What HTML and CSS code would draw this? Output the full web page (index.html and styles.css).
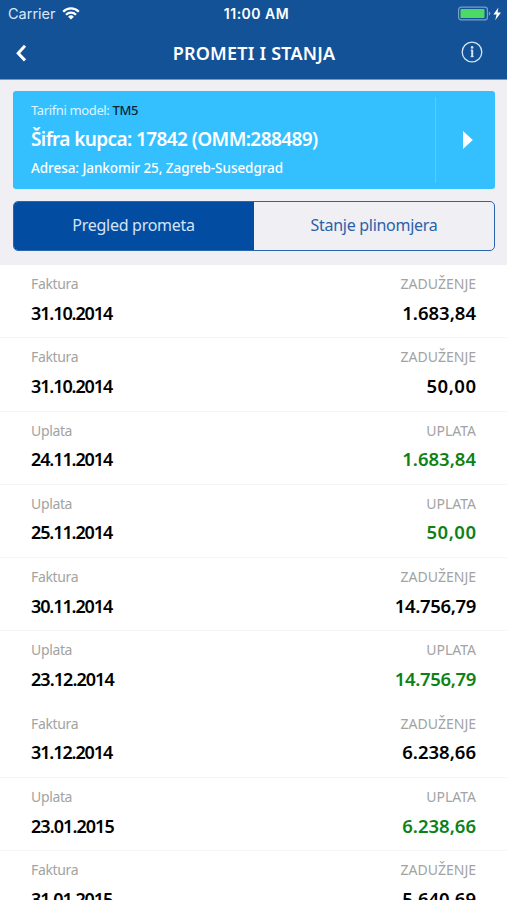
FILE: index.html
```html
<!DOCTYPE html>
<html lang="hr">
<head>
    <meta charset="UTF-8">
    <meta name="viewport" content="width=device-width, initial-scale=1.0">
    <title>Prometi i stanja</title>
    <link rel="stylesheet" href="styles.css">
</head>
<body>

    <header>
        <div class="status-bar">
            <div class="carrier">
                <span>Carrier</span>
                <svg class="wifi" viewBox="0 0 18 13" width="18" height="13">
                    <path d="M1.2 4.7a11 11 0 0 1 15.6 0" fill="none" stroke="#fff" stroke-width="2.3"/>
                    <path d="M4 7.7a7 7 0 0 1 10 0" fill="none" stroke="#fff" stroke-width="2.2"/>
                    <path d="M9 12.6 6.1 9.7a4.1 4.1 0 0 1 5.8 0z" fill="#fff"/>
                </svg>
            </div>
            <span class="time">11:00 AM</span>
            <div class="battery">
                <svg viewBox="0 0 44 16" width="44" height="16">
                    <rect x="0.6" y="1.1" width="28.8" height="12.8" rx="2.6" fill="none" stroke="#7a9fc9" stroke-width="1.2"/>
                    <rect x="2.5" y="3" width="24" height="9" rx="0.8" fill="#4cd964"/>
                    <path d="M30.8 5.5a2.2 2.2 0 0 1 0 4.2z" fill="#7a9fc9"/>
                    <path d="M40.4 1.4 35.4 8.4h3.2l-1.4 5.8L43 6.6h-3.4z" fill="#fff"/>
                </svg>
            </div>
        </div>
        <div class="nav-bar">
            <svg class="back" viewBox="0 0 12 18" width="12" height="18">
                <path d="M10 1.8 3.2 9.2l6.8 7.2" fill="none" stroke="#fff" stroke-width="3"/>
            </svg>
            <h1>PROMETI I STANJA</h1>
            <svg class="info" viewBox="0 0 22 22" width="22" height="22">
                <circle cx="11" cy="11" r="9.8" fill="none" stroke="#d5e6f8" stroke-width="1.3"/>
                <circle cx="11.1" cy="6.4" r="1.3" fill="#d5e6f8"/>
                <path d="M9.6 9.2h1.6M9.6 15.6h3" fill="none" stroke="#d5e6f8" stroke-width="1"/>
                <path d="M11.2 8.7v7.4" fill="none" stroke="#d5e6f8" stroke-width="2"/>
            </svg>
        </div>
    </header>

    <section class="top">
        <div class="customer">
            <div class="customer-info">
                <p class="model">Tarifni model: <span>TM5</span></p>
                <h2>Šifra kupca: 17842 (OMM:288489)</h2>
                <p class="address">Adresa: Jankomir 25, Zagreb-Susedgrad</p>
            </div>
            <div class="customer-arrow">
                <svg viewBox="0 0 10 18" width="10" height="18">
                    <path d="M0 0 9.8 9 0 18z" fill="#fff"/>
                </svg>
            </div>
        </div>
        <div class="tabs">
            <div class="tab active"><span>Pregled prometa</span></div>
            <div class="tab"><span>Stanje plinomjera</span></div>
        </div>
    </section>

    <ul class="list">
        <li>
            <div class="label"><span>Faktura</span><span class="type">ZADUŽENJE</span></div>
            <div class="value"><span class="date">31.10.2014</span><span class="amount">1.683,84</span></div>
        </li>
        <li>
            <div class="label"><span>Faktura</span><span class="type">ZADUŽENJE</span></div>
            <div class="value"><span class="date">31.10.2014</span><span class="amount short">50,00</span></div>
        </li>
        <li>
            <div class="label"><span>Uplata</span><span class="type">UPLATA</span></div>
            <div class="value"><span class="date">24.11.2014</span><span class="amount green">1.683,84</span></div>
        </li>
        <li>
            <div class="label"><span>Uplata</span><span class="type">UPLATA</span></div>
            <div class="value"><span class="date">25.11.2014</span><span class="amount short green">50,00</span></div>
        </li>
        <li>
            <div class="label"><span>Faktura</span><span class="type">ZADUŽENJE</span></div>
            <div class="value"><span class="date">30.11.2014</span><span class="amount long">14.756,79</span></div>
        </li>
        <li class="no-line">
            <div class="label"><span>Uplata</span><span class="type">UPLATA</span></div>
            <div class="value"><span class="date wide">23.12.2014</span><span class="amount long green">14.756,79</span></div>
        </li>
        <li>
            <div class="label"><span>Faktura</span><span class="type">ZADUŽENJE</span></div>
            <div class="value"><span class="date">31.12.2014</span><span class="amount">6.238,66</span></div>
        </li>
        <li>
            <div class="label"><span>Uplata</span><span class="type">UPLATA</span></div>
            <div class="value"><span class="date wide">23.01.2015</span><span class="amount green">6.238,66</span></div>
        </li>
        <li>
            <div class="label"><span>Faktura</span><span class="type">ZADUŽENJE</span></div>
            <div class="value"><span class="date">31.01.2015</span><span class="amount">5.640,69</span></div>
        </li>
    </ul>

</body>
</html>
```
FILE: styles.css
```css
* {
    box-sizing: border-box;
    margin: 0;
    padding: 0;
}

body {
    font-family: "Noto Sans", "Open Sans", sans-serif;
    background: #fff;
    color: #000;
    height: 900px;
    overflow: hidden;
}

svg {
    display: block;
}

/* Header */
header {
    height: 80px;
    background: #145297;
    border-bottom: 1px solid #6f9bd0;
    color: #fff;
}

.status-bar {
    display: grid;
    grid-template-columns: 1fr auto 1fr;
    align-items: center;
    height: 27px;
    padding: 0 5px 0 8px;
    font-family: Inter, sans-serif;
}

.carrier {
    display: flex;
    align-items: center;
    gap: 6px;
    font-size: 14.5px;
    color: #d9e8f8;
}

.time {
    padding-left: 3px;
    font-size: 14px;
    font-weight: 600;
    letter-spacing: 0.5px;
}

.battery {
    justify-self: end;
}

.nav-bar {
    display: grid;
    grid-template-columns: 1fr auto 1fr;
    align-items: center;
    height: 52px;
    padding: 0 24px 0 15px;
}

.info {
    justify-self: end;
    margin-top: -2px;
}

h1 {
    padding-left: 10px;
    font-size: 18px;
    font-weight: 600;
    letter-spacing: 0.2px;
}

/* Customer card and tabs */
.top {
    height: 185px;
    padding: 11px 12px 0 13px;
    background: #efeff4;
}

.customer {
    display: flex;
    height: 98px;
    padding: 6px 0;
    background: #34c0ff;
    border-radius: 3px;
    color: #fff;
}

.customer-info {
    flex: 1;
    padding: 2px 0 0 18px;
    border-right: 1px solid #5acbfb;
    white-space: nowrap;
}

.customer-arrow {
    display: flex;
    align-items: center;
    justify-content: center;
    width: 59px;
    padding-left: 5px;
}

.model {
    font-size: 13px;
    line-height: 23px;
    letter-spacing: -0.37px;
    color: #dff5ff;
}

.model span {
    color: #08243a;
    font-weight: 500;
}

h2 {
    font-size: 19px;
    font-weight: 600;
    line-height: 34px;
    letter-spacing: -0.6px;
}

.address {
    font-size: 13.5px;
    font-weight: 500;
    line-height: 25px;
    letter-spacing: -0.06px;
}

.tabs {
    display: grid;
    grid-template-columns: 1fr 1fr;
    height: 50px;
    margin-top: 12px;
    border: 1.5px solid #2a65ad;
    border-radius: 5px;
    overflow: hidden;
}

.tab {
    font-size: 16px;
    line-height: 46px;
    letter-spacing: -0.28px;
    text-align: center;
    color: #2a61a8;
}

.tab.active {
    padding-right: 1px;
    background: #024da1;
    color: #d3e4f8;
}

/* List of transactions */
.list {
    list-style: none;
}

.list li {
    height: 73.3px;
    padding: 7px 31px 0;
    border-bottom: 1px solid #f5f5f7;
}

.list li.no-line {
    border-bottom-color: #fff;
}

.label, .value {
    display: flex;
    align-items: baseline;
    justify-content: space-between;
}

.label {
    font-size: 14px;
    line-height: 24.5px;
    letter-spacing: -0.35px;
    color: #a3a3a3;
}

.type {
    letter-spacing: 0;
}

.value {
    font-size: 18.5px;
    font-weight: 600;
    line-height: 32.5px;
}

.date {
    font-size: 18px;
    letter-spacing: -1.12px;
}

.date.wide {
    letter-spacing: -0.95px;
}

.amount.short {
    margin-right: -0.5px;
    letter-spacing: 0.5px;
}

.amount.long {
    letter-spacing: -0.35px;
}

.green {
    color: #0c8216;
}
```
